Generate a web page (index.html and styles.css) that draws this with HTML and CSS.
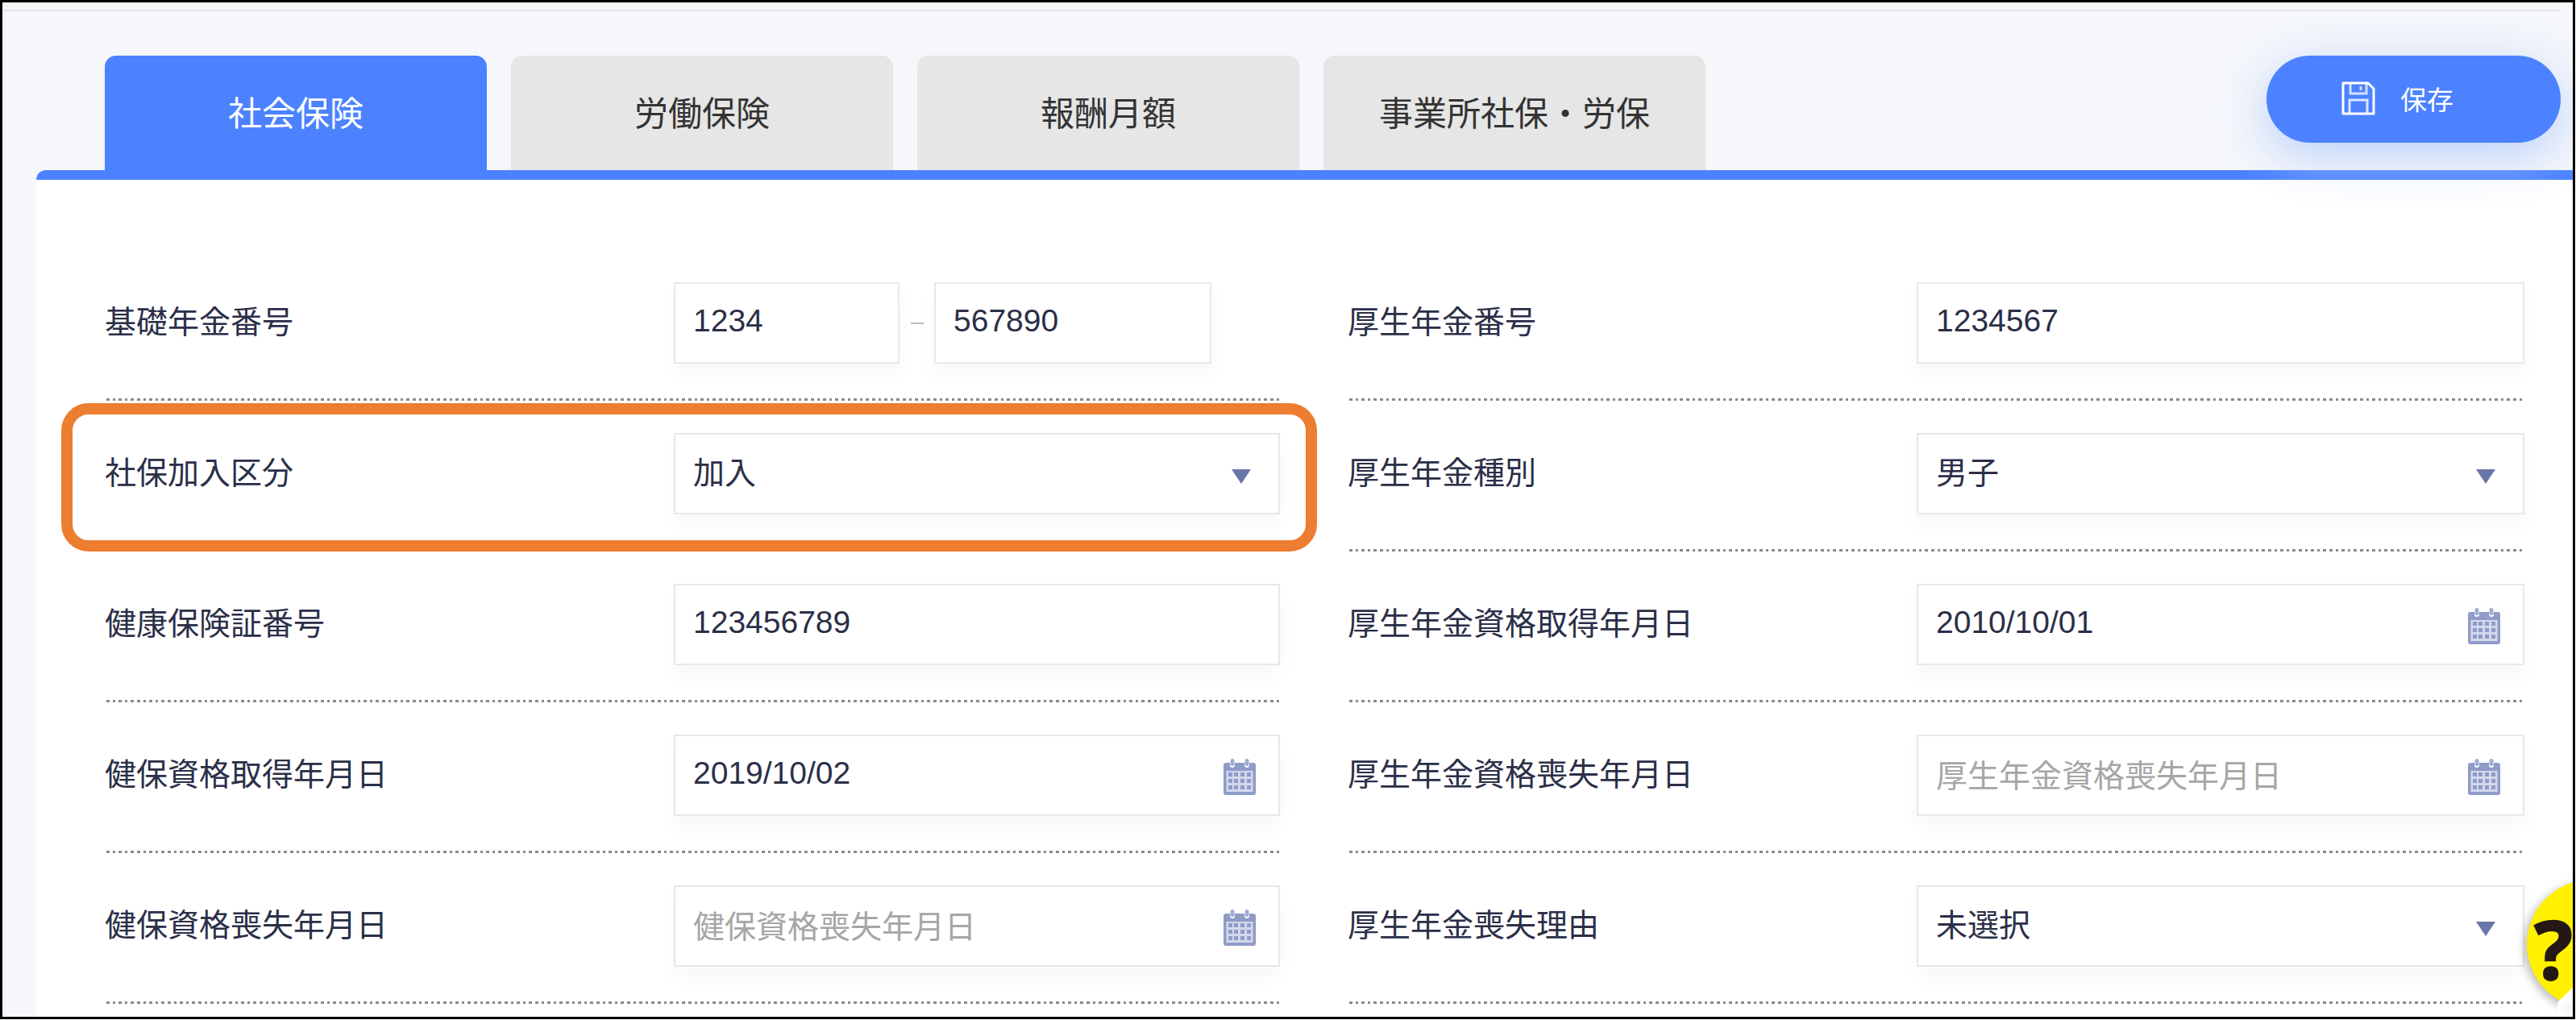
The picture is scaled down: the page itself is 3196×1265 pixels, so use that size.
FILE: index.html
```html
<!DOCTYPE html>
<html lang="ja">
<head>
<meta charset="utf-8">
<title>社会保険</title>
<link rel="stylesheet" href="styles.css">
</head>
<body>
<svg class="defs" width="0" height="0" aria-hidden="true">
  <symbol id="cal" viewBox="0 0 40 45">
    <path fill="#8f9bc8" d="M3 5h5v3a3 3 0 0 0 6 0V5h12v3a3 3 0 0 0 6 0V5h5a3 3 0 0 1 3 3v34a3 3 0 0 1-3 3H3a3 3 0 0 1-3-3V8a3 3 0 0 1 3-3z"/>
    <rect x="8.5" y="0" width="5" height="9" rx="2.5" fill="#a3add2"/>
    <rect x="26.5" y="0" width="5" height="9" rx="2.5" fill="#a3add2"/>
    <rect x="3.5" y="15" width="33" height="26" fill="#d3d8ec"/>
    <g fill="#8f9bc8">
      <rect x="6" y="17" width="5" height="5"/><rect x="13" y="17" width="5" height="5"/><rect x="21" y="17" width="5" height="5"/><rect x="29" y="17" width="5" height="5"/>
      <rect x="6" y="25" width="5" height="5"/><rect x="13" y="25" width="5" height="5"/><rect x="21" y="25" width="5" height="5"/><rect x="29" y="25" width="5" height="5"/>
      <rect x="6" y="33" width="5" height="5"/><rect x="13" y="33" width="5" height="5"/><rect x="21" y="33" width="5" height="5"/><rect x="29" y="33" width="5" height="5"/>
    </g>
  </symbol>
</svg>
<div class="frame">
  <div class="topline"></div>
  <header class="header">
    <nav class="tabs">
      <div class="tab tab-active">社会保険</div>
      <div class="tab">労働保険</div>
      <div class="tab">報酬月額</div>
      <div class="tab">事業所社保・労保</div>
    </nav>
    <button class="save" type="button">
      <svg class="save-icon" viewBox="0 0 42 42" fill="none" stroke="#fff" stroke-width="3">
        <path d="M2 2h31l7 7v31H2z" stroke-linejoin="round"/>
        <path d="M11 2v13h20V2" opacity=".75"/>
        <path d="M24 6v5" opacity=".75"/>
        <path d="M10 40V23h22v17" opacity=".8"/>
      </svg>
      <span>保存</span>
    </button>
  </header>
  <main class="panel">
    <div class="row">
      <div class="label">基礎年金番号</div>
      <div class="pair">
        <div class="input input-short"><span class="value">1234</span></div>
        <div class="dash"></div>
        <div class="input input-mid"><span class="value">567890</span></div>
      </div>
    </div>
    <div class="row">
      <div class="label">厚生年金番号</div>
      <div class="input"><span class="value">1234567</span></div>
    </div>
    <div class="row">
      <div class="label">社保加入区分</div>
      <div class="input"><span class="value value-jp">加入</span><i class="arrow"></i></div>
    </div>
    <div class="row">
      <div class="label">厚生年金種別</div>
      <div class="input"><span class="value value-jp">男子</span><i class="arrow"></i></div>
    </div>
    <div class="row">
      <div class="label">健康保険証番号</div>
      <div class="input"><span class="value">123456789</span></div>
    </div>
    <div class="row">
      <div class="label">厚生年金資格取得年月日</div>
      <div class="input"><span class="value">2010/10/01</span><svg class="cal"><use href="#cal"/></svg></div>
    </div>
    <div class="row">
      <div class="label">健保資格取得年月日</div>
      <div class="input"><span class="value">2019/10/02</span><svg class="cal"><use href="#cal"/></svg></div>
    </div>
    <div class="row">
      <div class="label">厚生年金資格喪失年月日</div>
      <div class="input"><span class="value placeholder">厚生年金資格喪失年月日</span><svg class="cal"><use href="#cal"/></svg></div>
    </div>
    <div class="row">
      <div class="label">健保資格喪失年月日</div>
      <div class="input"><span class="value placeholder">健保資格喪失年月日</span><svg class="cal"><use href="#cal"/></svg></div>
    </div>
    <div class="row">
      <div class="label">厚生年金喪失理由</div>
      <div class="input"><span class="value value-jp">未選択</span><i class="arrow"></i></div>
    </div>
  </main>
  <div class="highlight"></div>
  <div class="help">
    <svg class="help-badge" viewBox="0 0 120 193">
      <defs><filter id="soft" x="-30%" y="-30%" width="160%" height="160%"><feGaussianBlur stdDeviation="6"/></filter></defs>
      <circle cx="92" cy="104" r="80" fill="#000" opacity=".28" filter="url(#soft)"/>
      <circle cx="95" cy="100" r="80" fill="#fff100"/>
      <path d="M53 172l27-26v44h-27z" fill="#fff"/>
      <path d="M53 172l27 14v5z" fill="#777" opacity=".45" filter="url(#soft)"/>
    </svg>
    <span class="help-mark">?</span>
  </div>
</div>
</body>
</html>
```
FILE: styles.css
```css
* { box-sizing: border-box; }

html, body {
  margin: 0;
  padding: 0;
  background: #fff;
}

.defs { position: absolute; }

.frame {
  position: relative;
  width: 3195px;
  height: 1264px;
  border: 3px solid #000;
  background: #f5f7fb;
  overflow: hidden;
  font-family: "Noto Sans CJK JP", "Liberation Sans", sans-serif;
  color: #2b2f48;
}

.topline {
  height: 2px;
  margin: 9px 15px 0 0;
  background: #e2e3ea;
}

.header {
  display: flex;
  align-items: flex-start;
  height: 142px;
  margin-top: 55px;
  padding: 0 15px 0 127px;
}

.tabs {
  display: flex;
  gap: 30px;
  height: 100%;
}

.tab {
  display: flex;
  align-items: center;
  justify-content: center;
  width: 474px;
  padding-bottom: 6px;
  background: #e6e6e6;
  border-radius: 14px 14px 0 0;
  color: #333;
  font-size: 42px;
}

.tab-active {
  background: #4c82ff;
  color: #fff;
}

.save {
  position: relative;
  z-index: 2;
  display: flex;
  align-items: center;
  gap: 31px;
  width: 365px;
  height: 108px;
  margin-left: auto;
  padding: 0 0 2px 93px;
  border: 0;
  border-radius: 54px;
  background: #4c82ff;
  box-shadow: 0 16px 62px rgba(182, 206, 250, 0.95);
  color: #fff;
  font-family: inherit;
  font-size: 33px;
}

.save-icon {
  width: 42px;
  height: 42px;
  flex: none;
}

.panel {
  display: grid;
  grid-template-columns: 1458px 1460px;
  grid-auto-rows: 187px;
  column-gap: 84px;
  height: 1100px;
  margin-left: 42px;
  padding: 87px 60px 0 85px;
  border-top: 12px solid #4c82ff;
  border-top-left-radius: 12px;
  background: #fff;
}

.row {
  display: grid;
  grid-template-columns: 706px 1fr;
  align-items: start;
  padding-top: 40px;
  background: repeating-linear-gradient(90deg, #8a8a8a 0 3.6px, transparent 3.6px 7.6px) left 2px bottom / calc(100% - 2px) 3px no-repeat;
}

.label {
  display: flex;
  align-items: center;
  height: 91px;
  font-size: 39px;
  white-space: nowrap;
}

.pair {
  display: flex;
  align-items: flex-start;
}

.input {
  display: flex;
  align-items: center;
  justify-content: space-between;
  height: 101px;
  padding: 0 34px 0 22px;
  border: 2px solid #e8e8e8;
  background: #fff;
  box-shadow: 0 12px 22px rgba(0, 0, 0, 0.035);
}

.input-short { width: 280px; }
.input-mid { width: 344px; }

.dash {
  width: 16px;
  height: 2px;
  margin: 50px 13px 0 14px;
  background: #bbb;
}

.value {
  padding-bottom: 6px;
  font-family: "Liberation Sans", "Noto Sans CJK JP", sans-serif;
  font-size: 39px;
  white-space: nowrap;
}

.value-jp { padding-bottom: 9px; }

.placeholder { color: #a6a6a6; }

.arrow {
  width: 0;
  height: 0;
  margin-top: 6px;
  border-style: solid;
  border-width: 18px 12.5px 0;
  border-color: #6a76a8 transparent transparent;
}

.cal {
  width: 40px;
  height: 45px;
  margin: 4px -6px 0 0;
  flex: none;
}

.highlight {
  position: absolute;
  left: 73px;
  top: 497px;
  width: 1558px;
  height: 184px;
  border: 14px solid #ed7d31;
  border-radius: 34px;
  pointer-events: none;
}

.help {
  position: absolute;
  left: 3117px;
  top: 1068px;
  width: 72px;
  height: 193px;
  overflow: hidden;
}

.help-badge {
  position: absolute;
  left: 0;
  top: 0;
  width: 120px;
  height: 193px;
}

.help-mark {
  position: absolute;
  left: 24px;
  top: 45px;
  font-family: "Noto Sans", sans-serif;
  font-weight: 700;
  font-size: 100px;
  line-height: 120px;
  color: #231815;
  -webkit-text-stroke: 2px #231815;
}
```
